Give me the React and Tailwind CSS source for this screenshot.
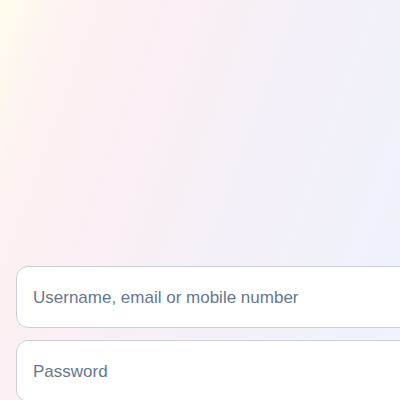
import React from "react";

const App = () => {
  return (
    <div className="w-[400px] h-[400px] overflow-hidden bg-[linear-gradient(110deg,#fffbec_0%,#fcf2f2_15%,#f9eff5_38%,#f3f0f9_65%,#eef3fb_100%)] font-['Liberation_Sans',Arial,sans-serif]">
      <div className="flex flex-col gap-3 pt-[266px] pl-4 w-[460px]">
        <div className="h-[62px] flex items-center rounded-xl border border-[#ccd0d5] bg-white px-4 pt-[2px]">
          <span className="text-[17px] text-[#65788b]">Username, email or mobile number</span>
        </div>
        <div className="h-[62px] flex items-center rounded-xl border border-[#ccd0d5] bg-white px-4 pt-[2px]">
          <span className="text-[17px] text-[#65788b]">Password</span>
        </div>
      </div>
    </div>
  );
};

export default App;
